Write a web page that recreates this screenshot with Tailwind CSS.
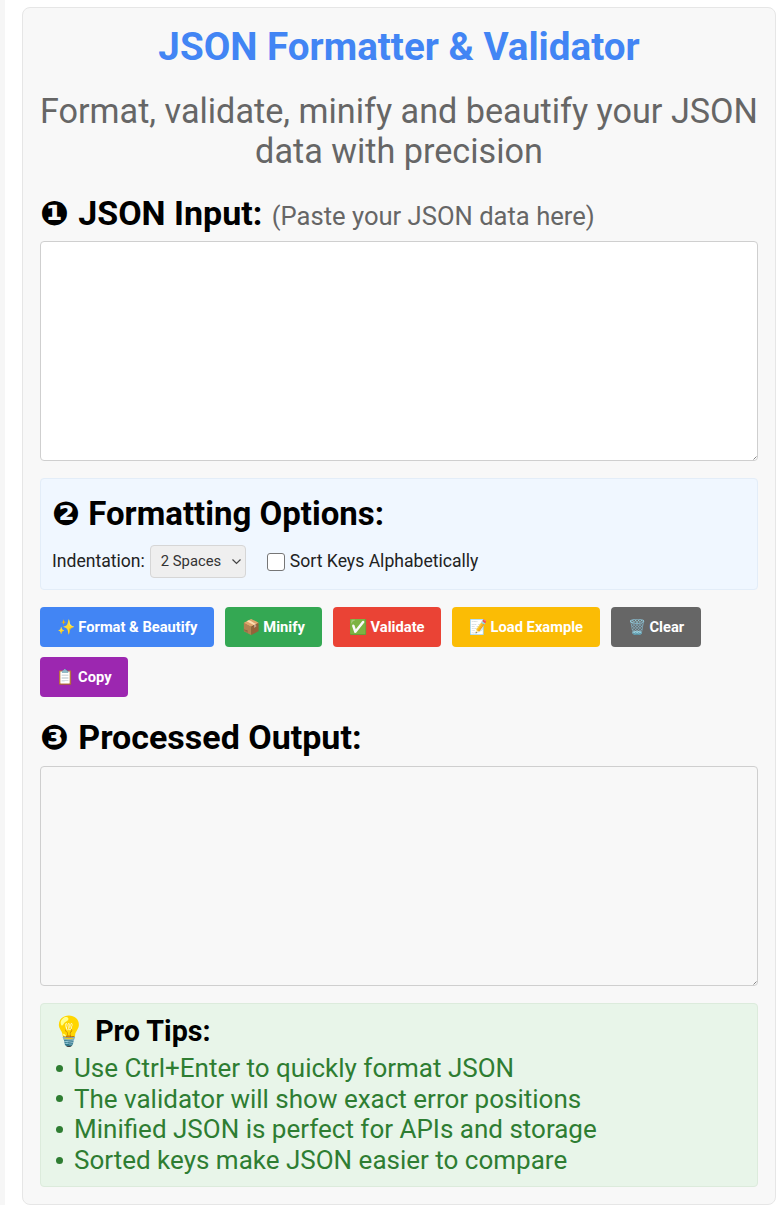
<!DOCTYPE html>
<html lang="en">

<head>
    <meta charset="UTF-8" />
    <meta name="viewport" content="width=device-width, initial-scale=1.0" />
    <title>JSON Formatter &amp; Validator</title>
    <script src="https://cdn.jsdelivr.net/npm/@tailwindcss/browser@4"></script>
</head>

<body class="bg-white h-[1205px] overflow-hidden font-['Roboto',sans-serif] text-black">
    <div class="flex h-full">
        <div class="w-[5px] bg-[#f6f6f6] shrink-0"></div>
        <!-- Main card -->
        <main class="ml-[17px] mt-[7px] w-[754px] h-[1198px] bg-[#f8f8f8] border border-[#e6e6e6] rounded-lg px-[17px] pt-[16px]">
            <h1 class="text-[38.6px] leading-[46px] font-bold text-[#4285f4] text-center">JSON Formatter &amp; Validator</h1>
            <p class="mt-[21px] -mx-[2px] text-[34.2px] leading-[40px] text-[#666666] text-center">Format, validate, minify and beautify your JSON data with precision</p>

            <h2 class="mt-[20px] text-[34px] leading-[44px] font-bold"><span class="font-['DejaVu_Sans'] mr-[1px]">❶</span> JSON Input: <span class="ml-[1px] text-[25.6px] font-normal text-[#666666]">(Paste your JSON data here)</span></h2>
            <div class="relative mt-[3px]">
                <textarea class="block w-full h-[220px] bg-white border border-[#cfcfcf] rounded resize-none"></textarea>
                <svg class="absolute right-[1px] bottom-[1px]" width="4" height="4" viewBox="0 0 4 4"><path d="M0.5 3.5L3.5 0.5" stroke="#888888" stroke-width="1" /></svg>
            </div>

            <!-- Options -->
            <section class="mt-[17px] h-[112px] bg-[#f0f7ff] border border-[#e3edf8] rounded px-[11px] pt-[14px]">
                <h2 class="text-[33px] leading-[42px] font-bold"><span class="font-['DejaVu_Sans']">❷</span> Formatting Options:</h2>
                <div class="mt-[10px] flex items-center text-[17.6px] text-[#222222]">
                    <span>Indentation:</span>
                    <div class="relative ml-[5px]">
                        <select class="block appearance-none w-[96px] h-[33px] pl-[10px] text-[14.8px] text-[#333333] bg-[#efefef] border border-[#d6d6d6] rounded">
                            <option>2 Spaces</option>
                        </select>
                        <svg class="absolute right-[4px] top-[13px]" width="11" height="7" viewBox="0 0 11 7" fill="none"><path d="M1.5 1.5L5.5 5.5L9.5 1.5" stroke="#444444" stroke-width="1.2" /></svg>
                    </div>
                    <input type="checkbox" class="ml-[21px] w-[18px] h-[18px] appearance-none bg-white border border-[#767676] rounded-[3px]">
                    <span class="ml-[5px]">Sort Keys Alphabetically</span>
                </div>
            </section>

            <!-- Actions -->
            <div class="mt-[17px] flex flex-wrap gap-x-[11px] gap-y-[10px] text-[14.7px] font-bold text-white">
                <button class="h-[40px] w-[174px] rounded bg-[#4285f4]">✨ Format &amp; Beautify</button>
                <button class="h-[40px] w-[96.5px] rounded bg-[#34a853]">📦 Minify</button>
                <button class="h-[40px] w-[108.5px] rounded bg-[#ea4335]">✅ Validate</button>
                <button class="h-[40px] w-[148px] rounded bg-[#fbbc05]">📝 Load Example</button>
                <button class="h-[40px] w-[90px] rounded bg-[#666666]">🗑️ Clear</button>
                <button class="h-[40px] w-[88px] rounded bg-[#9c27b0]">📋 Copy</button>
            </div>

            <h2 class="mt-[18px] text-[34px] leading-[44px] font-bold"><span class="font-['DejaVu_Sans'] mr-[1px]">❸</span> Processed Output:</h2>
            <div class="relative mt-[7px]">
                <textarea readonly class="block w-full h-[220px] bg-[#f8f8f8] border border-[#cfcfcf] rounded resize-none"></textarea>
                <svg class="absolute right-[1px] bottom-[1px]" width="4" height="4" viewBox="0 0 4 4"><path d="M0.5 3.5L3.5 0.5" stroke="#888888" stroke-width="1" /></svg>
            </div>

            <!-- Tips -->
            <section class="mt-[17px] h-[184px] bg-[#e8f5e9] border border-[#dcebdc] rounded pl-[10px] pt-[9px]">
                <h3 class="text-[28.7px] leading-[36px] font-bold"><span class="mr-[1px]">💡</span> Pro Tips:</h3>
                <ul class="mt-[4px] text-[26px] leading-[30.6px] text-[#2e7d32]">
                    <li class="flex items-center"><span class="ml-[5px] mr-[11px] w-[7px] h-[7px] rounded-full bg-[#2e7d32]"></span>Use Ctrl+Enter to quickly format JSON</li>
                    <li class="flex items-center"><span class="ml-[5px] mr-[11px] w-[7px] h-[7px] rounded-full bg-[#2e7d32]"></span>The validator will show exact error positions</li>
                    <li class="flex items-center"><span class="ml-[5px] mr-[11px] w-[7px] h-[7px] rounded-full bg-[#2e7d32]"></span>Minified JSON is perfect for APIs and storage</li>
                    <li class="flex items-center"><span class="ml-[5px] mr-[11px] w-[7px] h-[7px] rounded-full bg-[#2e7d32]"></span>Sorted keys make JSON easier to compare</li>
                </ul>
            </section>
        </main>
    </div>
</body>

</html>
